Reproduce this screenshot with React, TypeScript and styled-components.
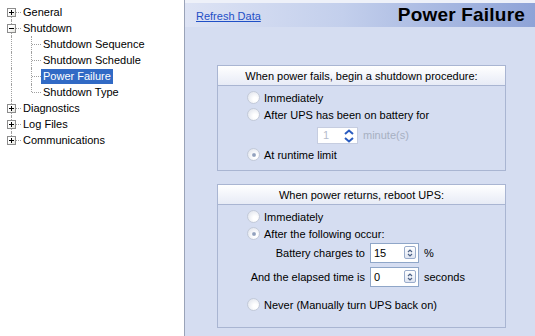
import React from "react";
import styled, { createGlobalStyle, css } from "styled-components";

const Global = createGlobalStyle`
  html, body { margin: 0; padding: 0; }
  body {
    font-family: "Liberation Sans", Arial, sans-serif;
    font-size: 11px;
    color: #000;
    overflow: hidden;
  }
`;

const Page = styled.div`
  display: flex;
  width: 535px;
  height: 336px;
  overflow: hidden;
`;

/* ---------- Tree ---------- */
const Tree = styled.div`
  width: 184px;
  flex: none;
  background: #fff;
  border-right: 1px solid #9aa3b8;
  padding-top: 4px;
  box-sizing: content-box;
`;

const Row = styled.div`
  position: relative;
  display: flex;
  align-items: center;
  height: 16px;
`;

const Guide = styled.span<{ $left: number; $part: "full" | "top" | "bottom" }>`
  position: absolute;
  left: ${(p) => p.$left}px;
  width: 0;
  border-left: 1px dotted #a0a0a0;
  ${(p) =>
    p.$part === "full"
      ? css`top: 0; bottom: 0;`
      : p.$part === "top"
      ? css`top: 0; height: 8px;`
      : css`top: 8px; bottom: 0;`}
`;

const HGuide = styled.span<{ $left: number; $width: number }>`
  position: absolute;
  left: ${(p) => p.$left}px;
  width: ${(p) => p.$width}px;
  top: 8px;
  border-top: 1px dotted #a0a0a0;
`;

const Expander = styled.span<{ $open?: boolean }>`
  position: absolute;
  left: 7px;
  top: 4px;
  width: 7px;
  height: 7px;
  border: 1px solid #8c8c8c;
  background: linear-gradient(135deg, #ffffff 40%, #e2e2dc);
  z-index: 1;
  &::before {
    content: "";
    position: absolute;
    left: 1px;
    top: 3px;
    width: 5px;
    height: 1px;
    background: #000;
  }
  ${(p) =>
    !p.$open &&
    css`
      &::after {
        content: "";
        position: absolute;
        left: 3px;
        top: 1px;
        width: 1px;
        height: 5px;
        background: #000;
      }
    `}
`;

const Label = styled.span<{ $indent: number; $selected?: boolean }>`
  margin-left: ${(p) => p.$indent}px;
  padding: 1px 2px;
  line-height: 13px;
  white-space: nowrap;
  ${(p) =>
    p.$selected &&
    css`
      background: #316ac5;
      color: #fff;
    `}
`;

type Node = { label: string; open?: boolean; children?: string[]; selected?: string };

const nodes: Node[] = [
  { label: "General" },
  {
    label: "Shutdown",
    open: true,
    children: ["Shutdown Sequence", "Shutdown Schedule", "Power Failure", "Shutdown Type"],
    selected: "Power Failure",
  },
  { label: "Diagnostics" },
  { label: "Log Files" },
  { label: "Communications" },
];

const TreeView: React.FC = () => (
  <Tree>
    {nodes.map((n, i) => {
      const first = i === 0;
      const last = i === nodes.length - 1;
      return (
        <React.Fragment key={n.label}>
          <Row>
            <Guide $left={11} $part={first ? "bottom" : last ? "top" : "full"} />
            <HGuide $left={12} $width={9} />
            <Expander $open={n.open} />
            <Label $indent={21}>{n.label}</Label>
          </Row>
          {n.open &&
            n.children?.map((c, j) => {
              const lastChild = j === (n.children?.length ?? 0) - 1;
              return (
                <Row key={c}>
                  {!last && <Guide $left={11} $part="full" />}
                  <Guide $left={31} $part={lastChild ? "top" : "full"} />
                  <HGuide $left={32} $width={9} />
                  <Label $indent={41} $selected={c === n.selected}>
                    {c}
                  </Label>
                </Row>
              );
            })}
        </React.Fragment>
      );
    })}
  </Tree>
);

/* ---------- Content ---------- */
const Content = styled.div`
  flex: 1;
  background: linear-gradient(#eef1f9 0, #eef1f9 3px, #d5ddf1 3px);
  padding-top: 3px;
  display: flex;
  flex-direction: column;
`;

const HeaderBar = styled.div`
  height: 24px;
  display: flex;
  align-items: center;
  justify-content: space-between;
  padding: 0 10px 0 11px;
  background: linear-gradient(to right, #dde3f4 0%, #c3cfec 45%, #8ea3d7 100%);
`;

const Link = styled.a`
  color: #1f4fc6;
  text-decoration: underline;
  font-size: 11px;
  cursor: pointer;
  margin-top: 2px;
`;

const Title = styled.h1`
  margin: 0;
  font-family: "Liberation Sans", Arial, sans-serif;
  font-weight: bold;
  font-size: 19px;
  color: #000;
  letter-spacing: 0.2px;
`;

const Body = styled.div`
  padding: 38px 0 0 32px;
  display: flex;
  flex-direction: column;
  gap: 13px;
`;

const Group = styled.div<{ $padBottom: number }>`
  width: 287px;
  border: 1px solid #a9b5d2;
  padding-bottom: ${(p) => p.$padBottom}px;
`;

const GroupHeader = styled.div`
  height: 19px;
  display: flex;
  align-items: center;
  justify-content: center;
  border-bottom: 1px solid #a9b5d2;
  background: linear-gradient(#ffffff, #e7ebf6);
`;

const GroupBody = styled.div`
  padding: 3px 0 0 29px;
  display: flex;
  flex-direction: column;
`;

const RadioRow = styled.div<{ $mt?: number }>`
  display: flex;
  align-items: center;
  height: 17px;
  gap: 4px;
  margin-top: ${(p) => p.$mt ?? 0}px;
`;

const RadioCircle = styled.span<{ $checked?: boolean }>`
  position: relative;
  width: 11px;
  height: 11px;
  border-radius: 50%;
  border: 1px solid #c3cad9;
  background: radial-gradient(circle at 65% 65%, #ffffff 20%, #e6e9f0 75%, #d5dae4 100%);
  flex: none;
  ${(p) =>
    p.$checked &&
    css`
      &::after {
        content: "";
        position: absolute;
        left: 3.5px;
        top: 3.5px;
        width: 4px;
        height: 4px;
        border-radius: 50%;
        background: radial-gradient(circle, #8a9ab8, #a9b5cc);
      }
    `}
`;

const Radio: React.FC<{ label: string; checked?: boolean; mt?: number }> = ({ label, checked, mt }) => (
  <RadioRow $mt={mt}>
    <RadioCircle $checked={checked} />
    <span>{label}</span>
  </RadioRow>
);

const SpinRow = styled.div`
  display: flex;
  align-items: center;
  height: 20px;
  margin: 2px 0 1px 70px;
  gap: 5px;
`;

const DisabledSpin = styled.div`
  position: relative;
  width: 39px;
  height: 17px;
  border: 1px solid #c6cde0;
  background: #fff;
  display: flex;
  align-items: center;
  padding-left: 5px;
  box-sizing: border-box;
  width: 41px;
  color: #b4bccc;
`;

const Chevrons = styled.svg`
  position: absolute;
  right: 2px;
  top: 0px;
`;

const DimText = styled.span`
  color: #a7b0c2;
`;

const FieldGrid = styled.div`
  display: grid;
  grid-template-columns: 118px 49px auto;
  column-gap: 5px;
  row-gap: 4px;
  align-items: center;
  margin: 1px 0 0 -29px;
  padding-left: 29px;
`;

const FieldLabel = styled.span`
  text-align: right;
  white-space: nowrap;
`;

const SpinBox = styled.div`
  position: relative;
  height: 20px;
  border: 1px solid #8fa6c8;
  background: #fff;
  box-sizing: border-box;
  display: flex;
  align-items: center;
  padding-left: 3px;
`;

const SpinButton = styled.span`
  position: absolute;
  right: 2px;
  top: 2px;
  width: 12px;
  height: 13px;
  border: 1px solid #9aaccb;
  border-radius: 2px;
  background: linear-gradient(#ffffff, #dfe5f2);
  display: flex;
  align-items: center;
  justify-content: center;
  box-sizing: border-box;
`;

const Spinner: React.FC<{ value: string }> = ({ value }) => (
  <SpinBox>
    {value}
    <SpinButton>
      <svg width="6" height="8" viewBox="0 0 6 8">
        <path d="M1 3 L3 1 L5 3" fill="none" stroke="#4d6185" strokeWidth="1.2" />
        <path d="M1 5 L3 7 L5 5" fill="none" stroke="#4d6185" strokeWidth="1.2" />
      </svg>
    </SpinButton>
  </SpinBox>
);

export default function App() {
  return (
    <>
      <Global />
      <Page>
        <TreeView />
        <Content>
          <HeaderBar>
            <Link>Refresh Data</Link>
            <Title>Power Failure</Title>
          </HeaderBar>
          <Body>
            <Group $padBottom={7}>
              <GroupHeader>When power fails, begin a shutdown procedure:</GroupHeader>
              <GroupBody>
                <Radio label="Immediately" />
                <Radio label="After UPS has been on battery for" />
                <SpinRow>
                  <DisabledSpin>
                    1
                    <Chevrons width="12" height="16" viewBox="0 0 12 16">
                      <path d="M2 6 L6 2.5 L10 6" fill="none" stroke="#2a5cc0" strokeWidth="2" />
                      <path d="M2 10 L6 13.5 L10 10" fill="none" stroke="#2a5cc0" strokeWidth="2" />
                    </Chevrons>
                  </DisabledSpin>
                  <DimText>minute(s)</DimText>
                </SpinRow>
                <Radio label="At runtime limit" checked />
              </GroupBody>
            </Group>
            <Group $padBottom={14}>
              <GroupHeader>When power returns, reboot UPS:</GroupHeader>
              <GroupBody>
                <Radio label="Immediately" />
                <Radio label="After the following occur:" checked />
                <FieldGrid>
                  <FieldLabel>Battery charges to</FieldLabel>
                  <Spinner value="15" />
                  <span>%</span>
                  <FieldLabel>And the elapsed time is</FieldLabel>
                  <Spinner value="0" />
                  <span>seconds</span>
                </FieldGrid>
                <Radio label="Never (Manually turn UPS back on)" mt={9} />
              </GroupBody>
            </Group>
          </Body>
        </Content>
      </Page>
    </>
  );
}
